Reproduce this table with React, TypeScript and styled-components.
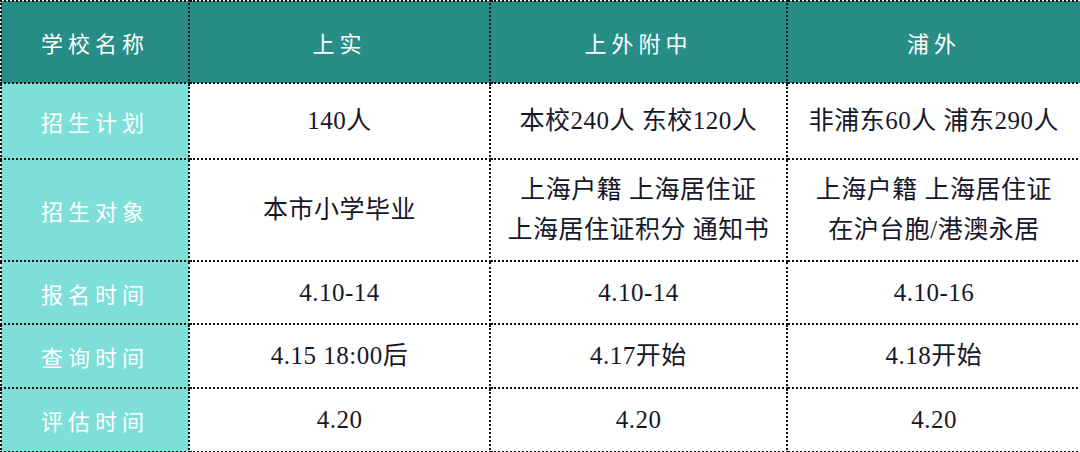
import React from "react";
import styled, { createGlobalStyle } from "styled-components";

const Global = createGlobalStyle`
  html, body { margin: 0; padding: 0; background: #ffffff; }
  body { font-family: "Liberation Serif", "Noto Sans CJK SC", serif; }
`;

const Table = styled.table`
  width: 1080px;
  border-collapse: collapse;
  table-layout: fixed;
`;

const Col = styled.col<{ $w: number }>`
  width: ${(p) => p.$w}px;
`;

const Row = styled.tr<{ $h: number }>`
  height: ${(p) => p.$h}px;
`;

const HeadCell = styled.th`
  background: #268e86;
  color: #ffffff;
  font-family: "Noto Sans CJK SC", sans-serif;
  font-weight: 400;
  font-size: 22px;
  letter-spacing: 5px;
  text-align: center;
  vertical-align: middle;
  border: 2px dotted #111;
  padding: 0;
`;

const LabelCell = styled(HeadCell)`
  background: #7ddfd8;
`;

const Cell = styled.td`
  background: #ffffff;
  color: #16182a;
  font-family: "Liberation Serif", "Noto Sans CJK SC", serif;
  font-size: 25px;
  letter-spacing: 0.5px;
  line-height: 40px;
  text-align: center;
  vertical-align: middle;
  border: 2px dotted #111;
  padding: 0;
`;

const Line = styled.div`
  white-space: nowrap;
`;

const columns = ["上实", "上外附中", "浦外"];
const widths = [188, 301, 297, 294];

const rows: { label: string; h: number; cells: string[][] }[] = [
  { label: "招生计划", h: 76, cells: [["140人"], ["本校240人 东校120人"], ["非浦东60人 浦东290人"]] },
  {
    label: "招生对象",
    h: 102,
    cells: [["本市小学毕业"], ["上海户籍 上海居住证", "上海居住证积分 通知书"], ["上海户籍 上海居住证", "在沪台胞/港澳永居"]],
  },
  { label: "报名时间", h: 63, cells: [["4.10-14"], ["4.10-14"], ["4.10-16"]] },
  { label: "查询时间", h: 64, cells: [["4.15 18:00后"], ["4.17开始"], ["4.18开始"]] },
  { label: "评估时间", h: 64, cells: [["4.20"], ["4.20"], ["4.20"]] },
];

export default function App() {
  return (
    <>
      <Global />
      <Table>
        <colgroup>
          {widths.map((w, i) => (
            <Col key={i} $w={w} />
          ))}
        </colgroup>
        <thead>
          <Row $h={82}>
            <HeadCell>学校名称</HeadCell>
            {columns.map((c) => (
              <HeadCell key={c}>{c}</HeadCell>
            ))}
          </Row>
        </thead>
        <tbody>
          {rows.map((r) => (
            <Row key={r.label} $h={r.h}>
              <LabelCell>{r.label}</LabelCell>
              {r.cells.map((lines, i) => (
                <Cell key={i}>
                  {lines.map((l, j) => (
                    <Line key={j}>{l}</Line>
                  ))}
                </Cell>
              ))}
            </Row>
          ))}
        </tbody>
      </Table>
    </>
  );
}
